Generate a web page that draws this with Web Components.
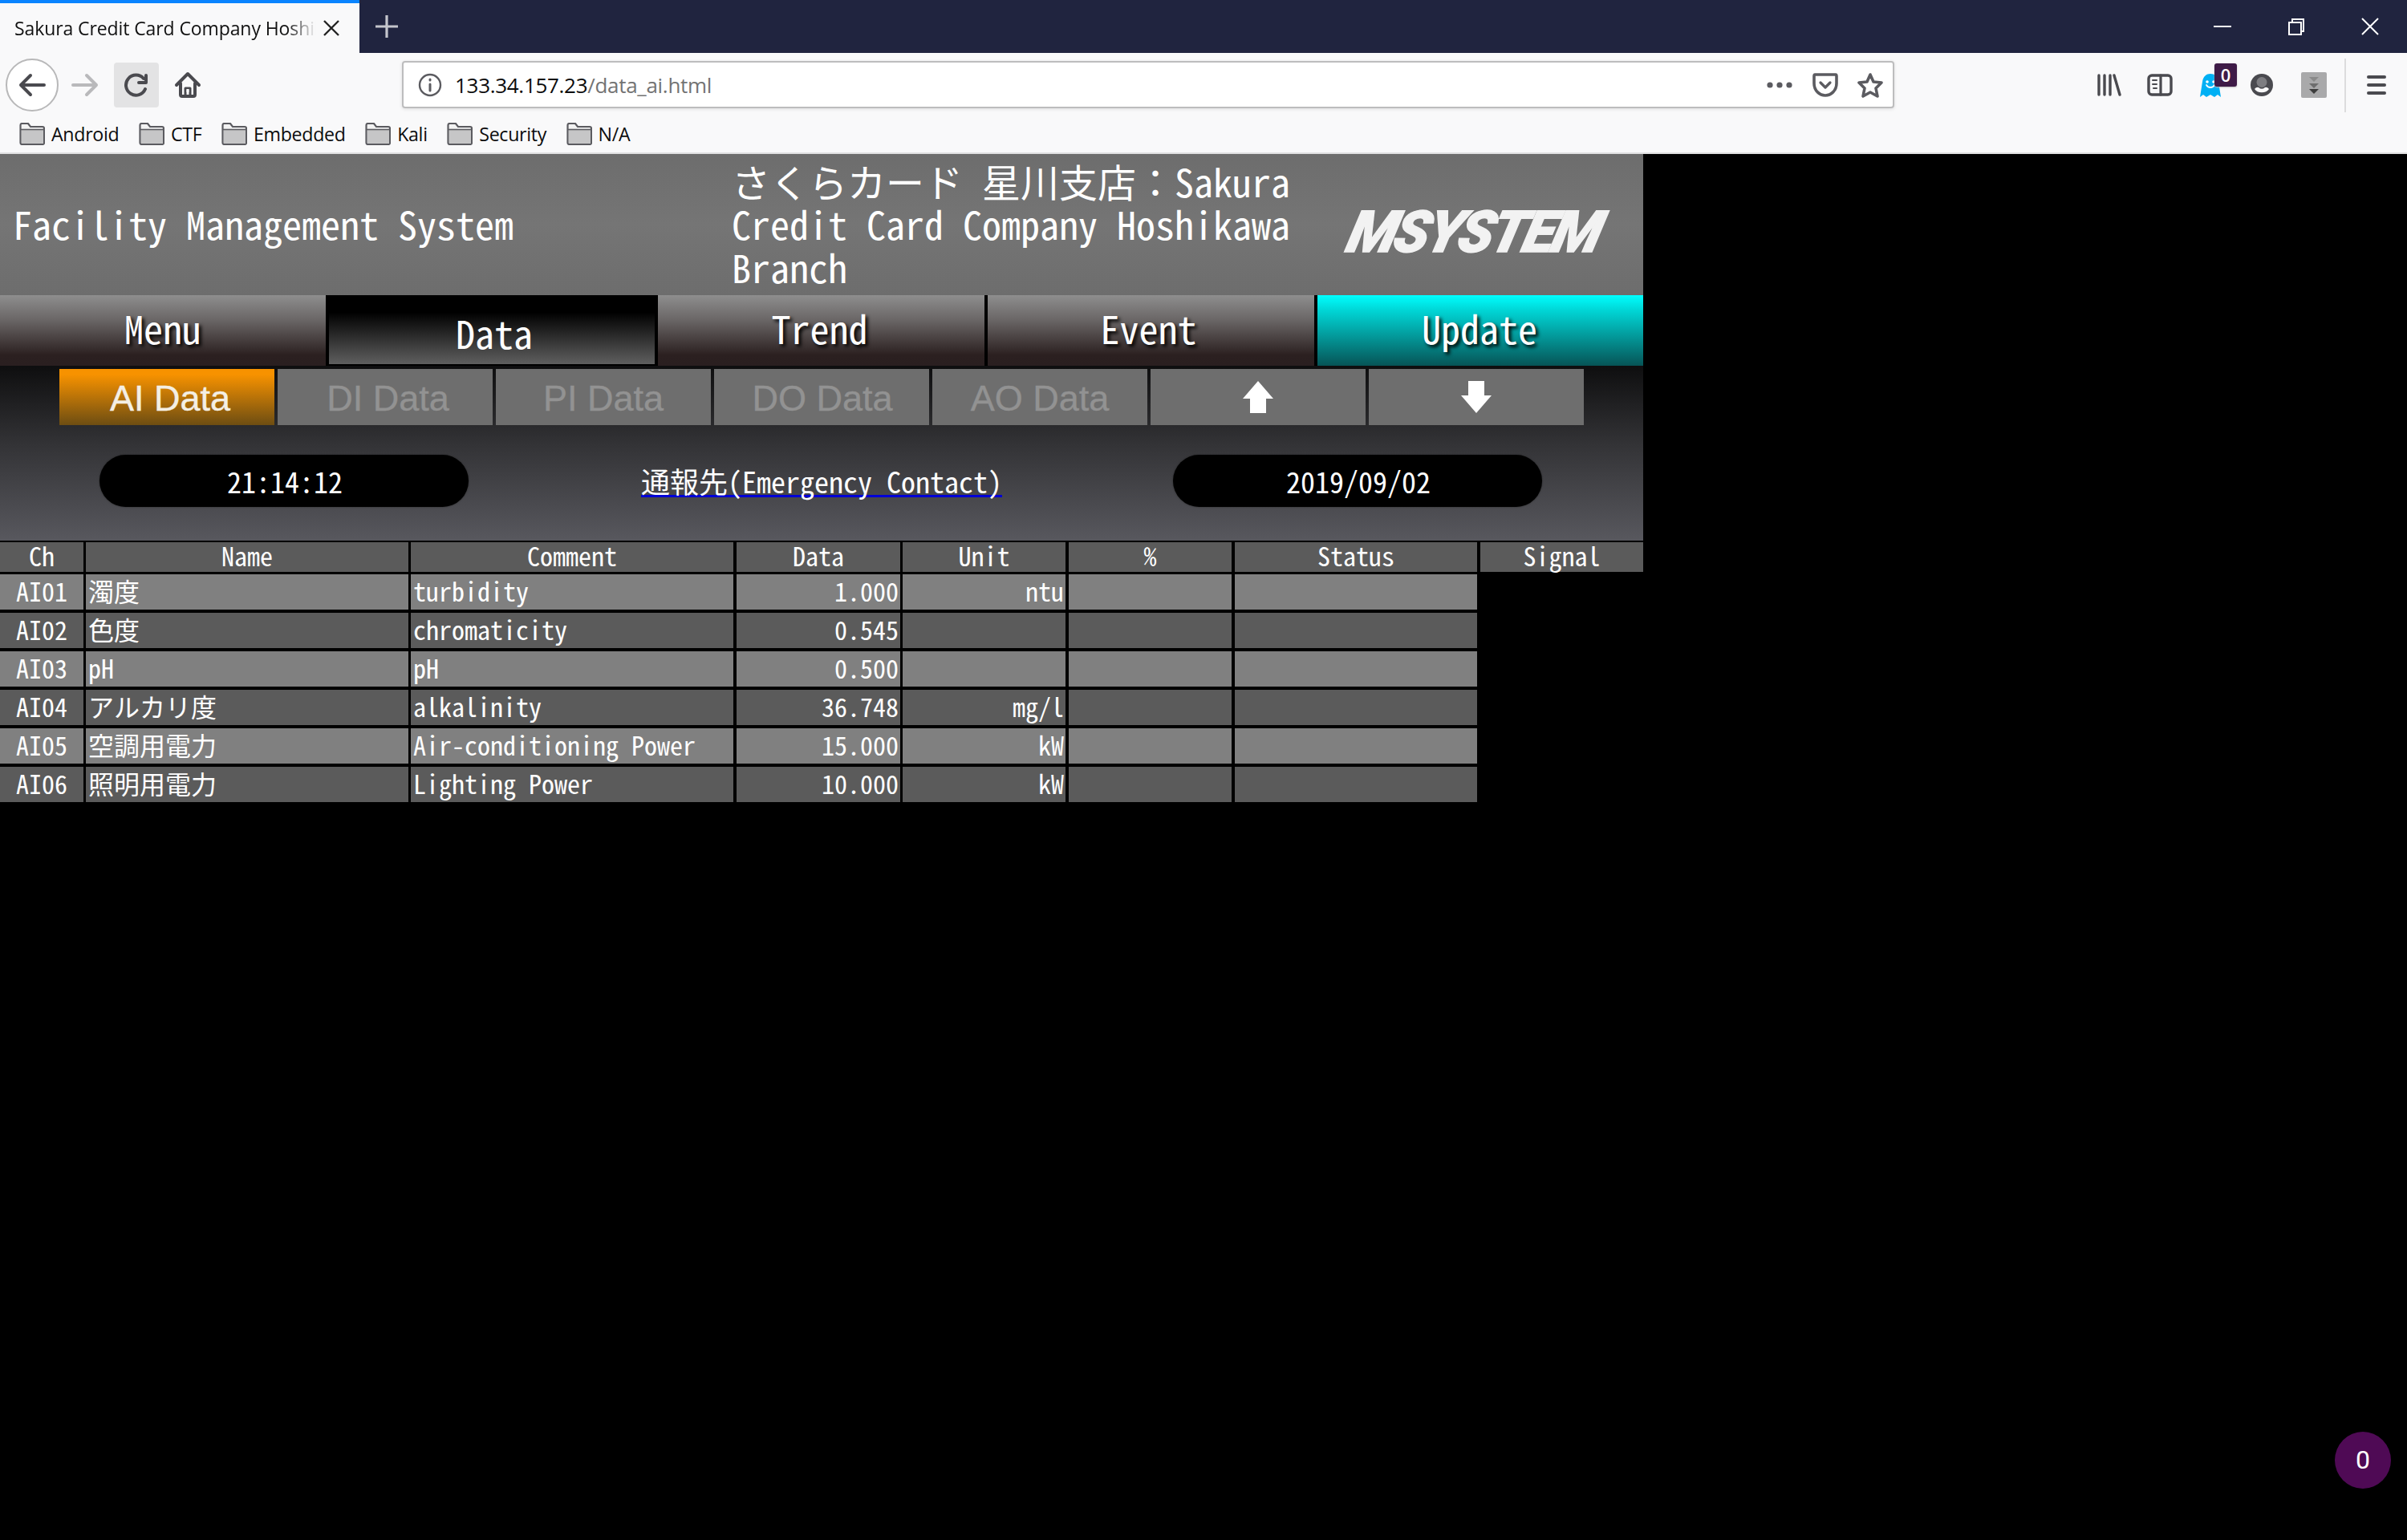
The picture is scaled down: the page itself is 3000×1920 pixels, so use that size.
<!DOCTYPE html>
<html>
<head>
<meta charset="utf-8">
<title>Sakura Credit Card Company Hoshikawa Branch</title>
<style>
    html, body { margin: 0; padding: 0; background: #000; }
    body { font-family: "Noto Sans Mono CJK JP", "Liberation Mono", "Noto Sans CJK JP", monospace; }
    app-count-badge { position: fixed; left: 2910px; top: 1785px; }
</style>
</head>
<body>
<app-browser-tabs title-text="Sakura Credit Card Company Hoshikawa Branch"></app-browser-tabs>
<app-browser-toolbar></app-browser-toolbar>
<app-bookmarks>
    <app-bookmark>Android</app-bookmark>
    <app-bookmark>CTF</app-bookmark>
    <app-bookmark>Embedded</app-bookmark>
    <app-bookmark>Kali</app-bookmark>
    <app-bookmark>Security</app-bookmark>
    <app-bookmark>N/A</app-bookmark>
</app-bookmarks>
<app-scada></app-scada>
<app-count-badge>0</app-count-badge>

<script>
const GUI = '"Open Sans", "Noto Sans", sans-serif';
const GOTHIC = '"Noto Sans Mono CJK JP", "Liberation Mono", "Noto Sans CJK JP", monospace';

class BrowserTabs extends HTMLElement {
    constructor() {
        super();
        this.attachShadow({mode: 'open'});
        this.shadowRoot.innerHTML = `
        <style>
            :host { display: flex; height: 66px; background: #20243f; color: #fff; font-family: ${GUI}; }
            .tab { width: 448px; box-sizing: border-box; height: 66px; background: #f9f9fa; border-top: 4px solid #0a84ff;
                   display: flex; align-items: center; padding: 0 0 0 18px; color: #111; font-size: 23px; }
            .title { width: 376px; white-space: nowrap; overflow: hidden; letter-spacing: -.1px;
                     -webkit-mask-image: linear-gradient(to right, #000 340px, transparent 376px); }
            .close { margin-left: 8px; display: flex; }
            .plus { width: 68px; display: flex; align-items: center; justify-content: center; }
            .fill { flex: 1; }
            .win { width: 92px; display: flex; align-items: center; justify-content: center; }
        </style>
        <div class="tab">
            <div class="title">${this.getAttribute('title-text')}</div>
            <svg class="close" width="22" height="22" viewBox="0 0 22 22"><path d="M2 2 20 20M20 2 2 20" stroke="#222" stroke-width="2.4"/></svg>
        </div>
        <div class="plus"><svg width="30" height="30" viewBox="0 0 30 30"><path d="M15 1V29M1 15H29" stroke="#c4c5cc" stroke-width="3.2"/></svg></div>
        <div class="fill"></div>
        <div class="win"><svg width="22" height="4"><rect width="22" height="2" y="1" fill="#fff"/></svg></div>
        <div class="win"><svg width="22" height="22" viewBox="0 0 22 22" fill="none" stroke="#fff" stroke-width="2"><rect x="2" y="6" width="15" height="15"/><path d="M6 6V2H20V17H17"/></svg></div>
        <div class="win"><svg width="24" height="24" viewBox="0 0 24 24"><path d="M2 2 22 22M22 2 2 22" stroke="#fff" stroke-width="2"/></svg></div>
        `;
    }
}

class BrowserToolbar extends HTMLElement {
    constructor() {
        super();
        this.attachShadow({mode: 'open'});
        this.shadowRoot.innerHTML = `
        <style>
            :host { display: flex; align-items: center; height: 77px; background: #f9f9fa; font-family: ${GUI}; box-sizing: border-box; padding-left: 7px; }
            svg { stroke-linecap: round; stroke-linejoin: round; }
            .back { width: 66px; height: 66px; box-sizing: border-box; border: 2px solid #b8b8b9; border-radius: 50%; background: #fff;
                    display: flex; align-items: center; justify-content: center; margin-top: 2px; }
            .btn { width: 56px; height: 56px; display: flex; align-items: center; justify-content: center; border-radius: 4px; margin-top: 2px; }
            .fwd { margin-left: 5px; margin-right: 8px; }
            .reload { background: #e3e3e4; }
            .home { margin-left: 8px; }
            .url { margin-left: 239px; margin-top: 1px; width: 1860px; height: 59px; box-sizing: border-box; border: 2px solid #bdbdbe; border-radius: 4px; background: #fff;
                   display: flex; align-items: center; padding: 2px 0 0 18px; box-shadow: 0 1px 4px rgba(0,0,0,.12); }
            .addr { margin-left: 16px; font-size: 26px; color: #0c0c0d; letter-spacing: -.3px; }
            .addr span { color: #737373; }
            .grow { flex: 1; }
            .ub { margin-right: 24px; display: flex; }
            .ub:last-child { margin-right: 12px; }
            .tools { display: flex; align-items: center; margin: 3px 0 0 236px; position: relative; }
            .t { width: 63px; box-sizing: border-box; display: flex; justify-content: center; }
            .t.acct { padding-left: 3px; }
            .t.ext { padding-left: 6px; }
            .count { position: absolute; left: 163px; top: 6px; width: 28px; height: 29px; background: #3f1b47; color: #fff; border-radius: 3px;
                     font-size: 22px; font-weight: 600; display: flex; align-items: center; justify-content: center; box-shadow: 0 1px 2px #bbb; }
            .sep { width: 2px; height: 67px; background: #dcdcdd; margin-left: 10px; margin-right: 26px; }
        </style>
        <div class="back"><svg width="34" height="30" viewBox="0 0 34 30" fill="none" stroke="#4a4a4f" stroke-width="4"><path d="M32 15H3M15 3 3 15 15 27"/></svg></div>
        <div class="btn fwd"><svg width="34" height="30" viewBox="0 0 34 30" fill="none" stroke="#b9b9bb" stroke-width="4"><path d="M2 15H31M19 3 31 15 19 27"/></svg></div>
        <div class="btn reload"><svg width="32" height="30" viewBox="0 0 32 30" fill="none" stroke="#4a4a4f" stroke-width="4"><path d="M25 7A12.5 12.5 0 1 0 27 20"/><path d="M28 3V12H19"/></svg></div>
        <div class="btn home"><svg width="34" height="34" viewBox="0 0 34 34"><path d="M3 17 17 3 31 17" fill="none" stroke="#4a4a4f" stroke-width="4"/><path d="M8 15V29Q8 31 10 31H24Q26 31 26 29V15" fill="none" stroke="#4a4a4f" stroke-width="4"/><path d="M14 31V21H20V31" fill="none" stroke="#4a4a4f" stroke-width="3"/><rect x="15.5" y="22" width="3" height="4" fill="#f9f9fa"/></svg></div>
        <div class="url">
            <svg width="30" height="30" viewBox="0 0 30 30" fill="none" stroke="#5b5b60" stroke-width="2.4"><circle cx="15" cy="15" r="13"/><path d="M15 14V22" stroke-width="3"/><path d="M15 8V9" stroke-width="3"/></svg>
            <div class="addr">133.34.157.23<span>/data_ai.html</span></div>
            <div class="grow"></div>
            <div class="ub"><svg width="34" height="8"><circle cx="5" cy="4" r="3.6" fill="#5b5b60"/><circle cx="17" cy="4" r="3.6" fill="#5b5b60"/><circle cx="29" cy="4" r="3.6" fill="#5b5b60"/></svg></div>
            <div class="ub"><svg width="32" height="30" viewBox="0 0 32 30" fill="none" stroke="#5b5b60" stroke-width="3.6"><path d="M3 2H29Q30 2 30 4V13C30 22 23 28 16 28S2 22 2 13V4Q2 2 3 2Z"/><path d="M10 12 16 18 22 12" stroke-width="3.2"/></svg></div>
            <div class="ub"><svg width="32" height="32" viewBox="0 0 32 32" fill="none" stroke="#5b5b60" stroke-width="3.6"><path d="M16 3 20 12 30 13 23 20 25 30 16 25 7 30 9 20 2 13 12 12Z"/></svg></div>
        </div>
        <div class="tools">
            <div class="t"><svg width="30" height="28" viewBox="0 0 30 28" fill="none" stroke="#4a4a4f" stroke-width="3.4"><path d="M2 2V26M9 2V26M16 2V26M21 2 28 26"/></svg></div>
            <div class="t"><svg width="32" height="28" viewBox="0 0 32 28"><rect x="2" y="2" width="28" height="24" rx="4" fill="none" stroke="#4a4a4f" stroke-width="3.4"/><path d="M17 2V26" stroke="#4a4a4f" stroke-width="3.2"/><path d="M7 8H12M7 13H12M8 18H12" stroke="#4a4a4f" stroke-width="2"/></svg></div>
            <div class="t"><svg width="26" height="30" viewBox="0 0 26 30"><path d="M0 30 3 11C4 4 8 1 13 1S22 4 23 11L26 30 22 27 18 30 13 27 8 30 4 27Z" fill="#00b0f4"/><circle cx="9" cy="11" r="1.8" fill="#fff"/><circle cx="17" cy="11" r="1.8" fill="#fff"/><path d="M8 15C10 19 16 19 18 15" fill="none" stroke="#fff" stroke-width="1.8"/></svg></div>
            <div class="t acct"><svg width="28" height="28" viewBox="0 0 28 28"><circle cx="14" cy="14" r="14" fill="#4a4a4f"/><circle cx="14" cy="10.5" r="6.5" fill="#7d7d81"/><path d="M5 19C7 16.6 9.5 16.2 10.8 17.6 12.2 19.2 15.8 19.2 17.2 17.6 18.5 16.2 21 16.6 23 19 20 24.6 8 24.6 5 19Z" fill="#f9f9fa"/></svg></div>
            <div class="t ext"><svg width="32" height="32" viewBox="0 0 32 32"><rect width="32" height="32" rx="2" fill="#a9a9aa"/><path d="M10 6H22L16 12Z" fill="#8a8a8a"/><path d="M10 14H22L16 20Z" fill="#6e6e6e"/><path d="M10 21H22L16 27Z" fill="#3d3d3d"/></svg></div>
            <div class="count">0</div>
            <div class="sep"></div>
            <svg width="24" height="24" viewBox="0 0 24 24"><rect width="24" height="4" rx="2" fill="#4a4a4f"/><rect y="10" width="24" height="4" rx="2" fill="#4a4a4f"/><rect y="20" width="24" height="4" rx="2" fill="#4a4a4f"/></svg>
        </div>
        `;
    }
}

class Bookmarks extends HTMLElement {
    constructor() {
        super();
        this.attachShadow({mode: 'open'});
        this.shadowRoot.innerHTML = `
        <style>
            :host { display: flex; align-items: center; height: 47px; box-sizing: content-box; background: #f9f9fa; border-bottom: 2px solid #e0e0e1; padding-left: 24px; gap: 24.5px; }
        </style>
        <slot></slot>
        `;
    }
}

class Bookmark extends HTMLElement {
    constructor() {
        super();
        this.attachShadow({mode: 'open'});
        this.shadowRoot.innerHTML = `
        <style>
            :host { display: flex; align-items: center; gap: 8px; font-family: ${GUI}; font-size: 23.2px; color: #0c0c0d; letter-spacing: -.3px; }
        </style>
        <svg width="32" height="28" viewBox="0 0 32 28"><path d="M1.5 25V3C1.5 2 2.5 1 3.5 1H11L14 5H29C30 5 31 6 31 7V25C31 26 30 27 29 27H3.5C2.5 27 1.5 26 1.5 25Z" fill="#f3f3f3" stroke="#5b5b60" stroke-width="2.2"/><rect x="3" y="9" width="27" height="17" fill="#c6c6c7"/><path d="M2 8.5H31" stroke="#5b5b60" stroke-width="1.6"/></svg>
        <slot></slot>
        `;
    }
}

class Scada extends HTMLElement {
    constructor() {
        super();
        this.attachShadow({mode: 'open'});
        const rows = [
            ['AI01', '濁度', 'turbidity', '1.000', 'ntu'],
            ['AI02', '色度', 'chromaticity', '0.545', ''],
            ['AI03', 'pH', 'pH', '0.500', ''],
            ['AI04', 'アルカリ度', 'alkalinity', '36.748', 'mg/l'],
            ['AI05', '空調用電力', 'Air-conditioning Power', '15.000', 'kW'],
            ['AI06', '照明用電力', 'Lighting Power', '10.000', 'kW']
        ];
        const heads = ['Ch', 'Name', 'Comment', 'Data', 'Unit', '%', 'Status', 'Signal'];
        // black rule on the right of each column, the table has no gaps
        const rule = [3, 3, 4, 3, 4, 4, 4, 0];
        const cell = (cls, i, text) => `<div class="${cls}" style="border-right-width:${rule[i]}px">${text}</div>`;
        this.shadowRoot.innerHTML = `
        <style>
            :host { display: block; width: 2048px; font-family: ${GOTHIC}; color: #fff; }
            .head { height: 176px; background: linear-gradient(#6d6d6d, #757575 50%, #6d6d6d); display: grid; grid-template-columns: 912px 746px 1fr; font-size: 48px; line-height: 53.5px; align-items: center; }
            .sys { padding-left: 16px; margin-top: -2px; }
            .site { padding-right: 20px; margin-top: -2px; }
            .logo { font-family: Roboto, sans-serif; font-weight: 900; font-style: italic; font-size: 72px; line-height: 60px; color: #f2f2f2;
                    letter-spacing: -3.4px; -webkit-text-stroke: 1.5px #f2f2f2; margin: 20px 0 0 16px; white-space: nowrap; transform: skewX(-14deg); transform-origin: left bottom; }
            nav { display: grid; grid-template-columns: 406px 414px 407px 411px 410px; height: 88px; }
            nav a { display: flex; align-items: center; justify-content: center; padding: 0 6px 8px 0; box-sizing: border-box; font-size: 48px; text-shadow: 3px 3px 4px #000;
                    background: linear-gradient(#8e8e8e, #6a6666 35%, #2b2020 85%, #2a1f20); border-left: 4px solid #000; }
            nav a:first-child { border-left: 0; padding-right: 0; }
            nav a.on { background: linear-gradient(#000 25%, #5f5f5f); border: 4px solid #000; border-top: 0; padding: 6px 0 0 6px; text-shadow: none; border-bottom-width: 2px; }
            nav a.on + a { border-left: 0; padding-right: 4px; }
            nav a.up { background: linear-gradient(#00ffff, #00d8d8 20%, #065456); padding-right: 2px; }
            .panel { height: 218px; padding-top: 4px; box-sizing: border-box; background: linear-gradient(#0e0e0f, #333336 45%, #58585e); }
            .sub { display: grid; grid-template-columns: repeat(7, 268px); gap: 4px; margin-left: 74px; height: 70px; }
            .sub div { background: #6e6e6e; color: #929292; font-family: "Liberation Sans", sans-serif; font-size: 45px; -webkit-text-stroke: .4px; display: flex; align-items: center; justify-content: center; padding-top: 4px; box-sizing: border-box; }
            .sub .on { background: linear-gradient(#f79200 10%, #6d4d12); color: #f4efe4; padding-left: 8px; }
            .sub .on + div { padding-left: 7px; }
            .sub .do { padding-left: 2px; }
            .sub div svg { margin-top: -4px; }
            .info { display: grid; grid-template-columns: 460px 1fr 460px; margin: 37px 126px 0 124px; height: 65px; align-items: center; }
            .pill { background: #000; border-radius: 33px; height: 65px; display: flex; align-items: center; justify-content: center; font-size: 36px; padding: 0 0 2px 2px; box-sizing: border-box; box-shadow: 0 0 2px #222; }
            .link { text-align: center; font-size: 36px; text-decoration: underline; text-decoration-color: #0000d8; text-decoration-thickness: 3px; text-decoration-skip-ink: none; text-underline-offset: 2px; padding: 0 0 1px 2px; }
            .table { display: grid; grid-template-columns: 107px 405px 406px 207px 207px 207px 306px 203px; margin-top: 2px; font-size: 32px; }
            .th, .td { border-right: 0 solid #000; box-sizing: border-box; white-space: nowrap; }
            .th { background: #5b5b5b; height: 37px; line-height: 33px; text-align: center; margin-bottom: 3px; }
            .td { height: 44px; margin-bottom: 4px; padding: 0 2px 0 3px; line-height: 41px; }
            .ch { text-align: center; padding: 0; }
            .r { text-align: right; }
            .a { background: #808080; }
            .b { background: #5b5b5b; }
        </style>
        <div class="head">
            <div class="sys">Facility Management System</div>
            <div class="site">さくらカード 星川支店：Sakura Credit Card Company Hoshikawa Branch</div>
            <div class="logo">MSYSTEM</div>
        </div>
        <nav>
            <a>Menu</a><a class="on">Data</a><a>Trend</a><a>Event</a><a class="up">Update</a>
        </nav>
        <div class="panel">
            <div class="sub">
                <div class="on">AI Data</div><div>DI Data</div><div>PI Data</div><div class="do">DO Data</div><div>AO Data</div>
                <div><svg width="40" height="40" viewBox="0 0 40 40"><path d="M20 0 39 22H30V40H10V22H1Z" fill="#fff"/></svg></div>
                <div><svg width="40" height="40" viewBox="0 0 40 40"><path d="M20 40 39 18H30V0H10V18H1Z" fill="#fff"/></svg></div>
            </div>
            <div class="info">
                <div class="pill">21:14:12</div>
                <div class="link">通報先(Emergency Contact)</div>
                <div class="pill">2019/09/02</div>
            </div>
        </div>
        <div class="table">
            ${heads.map((h, i) => cell('th', i, h)).join('')}
            ${rows.map((r, i) => {
                const c = i % 2 ? 'b' : 'a';
                return cell(`td ch ${c}`, 0, r[0]) + cell(`td ${c}`, 1, r[1]) + cell(`td ${c}`, 2, r[2]) + cell(`td r ${c}`, 3, r[3]) + cell(`td r ${c}`, 4, r[4]) + cell(`td ${c}`, 5, '') + cell(`td ${c}`, 6, '') + '<div></div>';
            }).join('')}
        </div>
        `;
    }
}

class CountBadge extends HTMLElement {
    constructor() {
        super();
        this.attachShadow({mode: 'open'});
        this.shadowRoot.innerHTML = `
        <style>
            :host { display: flex; width: 70px; height: 71px; box-sizing: border-box; padding-bottom: 2px; border-radius: 50%; background: #4f0a55; color: #fff; align-items: center; justify-content: center; font-family: "Roboto", sans-serif; font-size: 32px; }
        </style>
        <slot></slot>
        `;
    }
}

window.customElements.define('app-browser-tabs', BrowserTabs);
window.customElements.define('app-browser-toolbar', BrowserToolbar);
window.customElements.define('app-bookmarks', Bookmarks);
window.customElements.define('app-bookmark', Bookmark);
window.customElements.define('app-scada', Scada);
window.customElements.define('app-count-badge', CountBadge);
</script>
</body>
</html>
